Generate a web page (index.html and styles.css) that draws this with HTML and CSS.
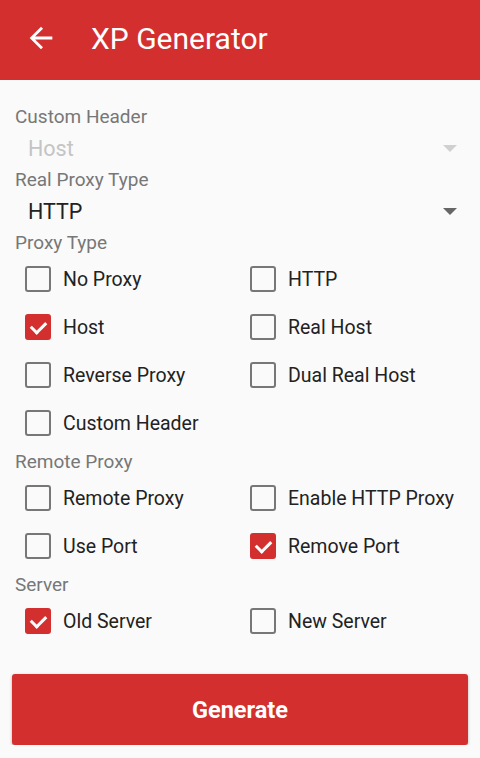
FILE: index.html
```html
<!DOCTYPE html>
<html lang="en">

<head>
    <meta charset="UTF-8">
    <meta name="viewport" content="width=device-width, initial-scale=1.0">
    <title>XP Generator</title>
    <link rel="stylesheet" href="styles.css">
</head>

<body>
    <div class="toolbar">
        <svg class="back" viewBox="0 0 24 24"><path d="M20 11H7.83l5.59-5.59L12 4l-8 8 8 8 1.41-1.41L7.83 13H20v-2z"/></svg>
        <h1>XP Generator</h1>
    </div>

    <div class="content">
        <div class="label">Custom Header</div>
        <div class="spinner disabled">
            <span>Host</span>
            <span class="caret"></span>
        </div>

        <div class="label">Real Proxy Type</div>
        <div class="spinner">
            <span>HTTP</span>
            <span class="caret"></span>
        </div>

        <div class="label">Proxy Type</div>
        <div class="checks">
            <label class="check"><span class="box"></span>No Proxy</label>
            <label class="check"><span class="box"></span>HTTP</label>
            <label class="check"><span class="box on"></span>Host</label>
            <label class="check"><span class="box"></span>Real Host</label>
            <label class="check"><span class="box"></span>Reverse Proxy</label>
            <label class="check"><span class="box"></span>Dual Real Host</label>
            <label class="check"><span class="box"></span>Custom Header</label>
        </div>

        <div class="label">Remote Proxy</div>
        <div class="checks">
            <label class="check"><span class="box"></span>Remote Proxy</label>
            <label class="check"><span class="box"></span>Enable HTTP Proxy</label>
            <label class="check"><span class="box"></span>Use Port</label>
            <label class="check"><span class="box on"></span>Remove Port</label>
        </div>

        <div class="label">Server</div>
        <div class="checks">
            <label class="check"><span class="box on"></span>Old Server</label>
            <label class="check"><span class="box"></span>New Server</label>
        </div>

        <button class="generate">Generate</button>
    </div>
</body>

</html>
```

FILE: styles.css
```css
body {
    font-family: Roboto, "Noto Sans", sans-serif;
    background-color: #fafafa;
    margin: 0;
    padding: 0;
}

.toolbar {
    height: 80px;
    background-color: #d32f2f;
    display: flex;
    align-items: center;
    color: white;
}

.back {
    width: 34px;
    height: 34px;
    fill: #fff;
    margin-left: 24px;
    margin-top: -4px;
}

.toolbar h1 {
    font-size: 30px;
    font-weight: 400;
    margin: -4px 0 0 33px;
}

.content {
    padding: 25px 0 0 15px;
}

.label {
    font-size: 19px;
    line-height: 24px;
    color: #777;
}

.checks + .label {
    margin-top: 3px;
}

.spinner {
    height: 39px;
    display: flex;
    align-items: center;
    justify-content: space-between;
    padding: 0 23px 0 13px;
    font-size: 21.5px;
    color: #222;
}

.spinner.disabled {
    color: #c4c4c4;
}

.caret {
    width: 0;
    height: 0;
    border-left: 7px solid transparent;
    border-right: 7px solid transparent;
    border-top: 7px solid #666;
}

.spinner.disabled .caret {
    border-top-color: #d0d0d0;
}

.checks {
    display: grid;
    grid-template-columns: 225px 1fr;
    margin-left: 10px;
}

.check {
    height: 48px;
    display: flex;
    align-items: center;
    gap: 12px;
    font-size: 19.5px;
    color: #222;
}

.box {
    width: 22px;
    height: 22px;
    border: 2.5px solid #777;
    border-radius: 3px;
    position: relative;
}

.box.on {
    background-color: #d32f2f;
    border-color: #d32f2f;
}

.box.on::after {
    content: "";
    position: absolute;
    left: 4px;
    top: 1px;
    width: 12px;
    height: 7px;
    border-left: 3px solid #fff;
    border-bottom: 3px solid #fff;
    transform: translate(0, 4px) rotate(-45deg);
}

.generate {
    display: block;
    width: 456px;
    height: 71px;
    margin: 29px 0 0 -3px;
    background-color: #d32f2f;
    color: #fff;
    border: none;
    border-radius: 3px;
    box-shadow: 0px 1px 3px rgba(0, 0, 0, 0.3);
    font-family: Roboto, sans-serif;
    font-size: 23.5px;
    font-weight: 700;
}
```
